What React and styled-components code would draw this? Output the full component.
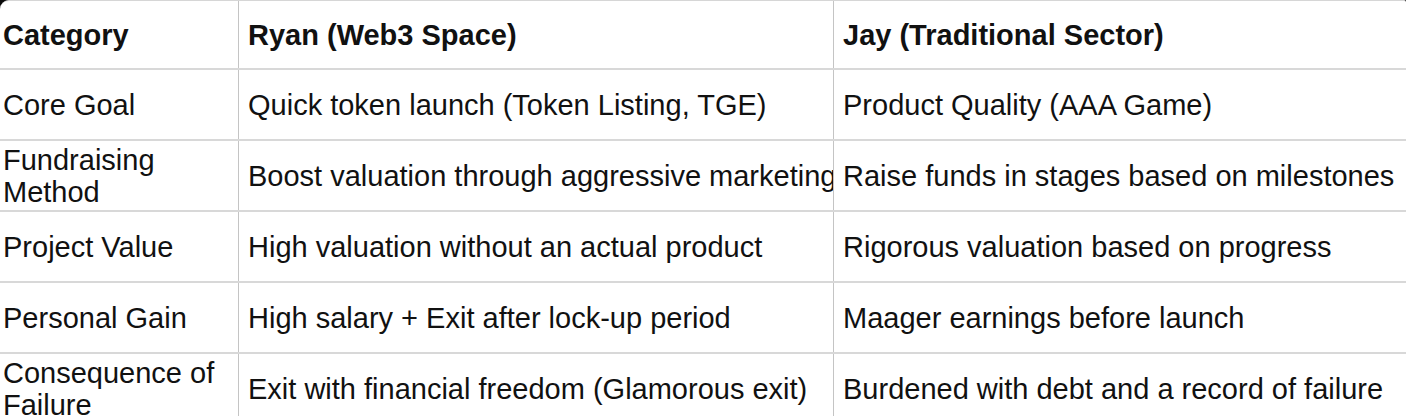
import styled, { createGlobalStyle } from "styled-components";

const GlobalStyle = createGlobalStyle`
  html, body {
    margin: 0;
    padding: 0;
    background: #0b0b0b;
    overflow: hidden;
  }
  body {
    width: 1406px;
    height: 416px;
    font-family: "Liberation Sans", Arial, sans-serif;
  }
`;

const rows = [
  ["Core Goal", "Quick token launch (Token Listing, TGE)", "Product Quality (AAA Game)"],
  ["Fundraising Method", "Boost valuation through aggressive marketing", "Raise funds in stages based on milestones"],
  ["Project Value", "High valuation without an actual product", "Rigorous valuation based on progress"],
  ["Personal Gain", "High salary + Exit after lock-up period", "Maager earnings before launch"],
  ["Consequence of Failure", "Exit with financial freedom (Glamorous exit)", "Burdened with debt and a record of failure"],
];

const App = () => (
  <>
    <GlobalStyle />
    <Sheet>
      <Row $head>
        <Cell $first>Category</Cell>
        <Cell>Ryan (Web3 Space)</Cell>
        <Cell>Jay (Traditional Sector)</Cell>
      </Row>
      {rows.map((r) => (
        <Row key={r[0]}>
          <Cell $first $wrap>{r[0]}</Cell>
          <Cell>{r[1]}</Cell>
          <Cell>{r[2]}</Cell>
        </Row>
      ))}
    </Sheet>
  </>
);

export default App;

const Sheet = styled.div`
  width: 1406px;
  height: 416px;
  overflow: hidden;
  background: #ffffff;
  border-top: 1px solid #d6d6d6;
  border-top-left-radius: 9px;
  border-top-right-radius: 2px;
  box-sizing: border-box;
  color: #111111;
`;

const Row = styled.div`
  display: grid;
  grid-template-columns: 238px 595px 1fr;
  height: ${(p) => (p.$head ? "69px" : "71px")};
  border-bottom: 2px solid #d8d8d8;
  box-sizing: border-box;
  font-size: 29px;
  font-weight: ${(p) => (p.$head ? 700 : 400)};
`;

const Cell = styled.div`
  display: flex;
  align-items: center;
  padding: 0 0 0 ${(p) => (p.$first ? "3px" : "9px")};
  border-left: ${(p) => (p.$first ? "none" : "1px solid #c4c4c4")};
  white-space: ${(p) => (p.$wrap ? "normal" : "nowrap")};
  overflow: hidden;
  line-height: 32px;
  box-sizing: border-box;
  min-width: 0;
`;
